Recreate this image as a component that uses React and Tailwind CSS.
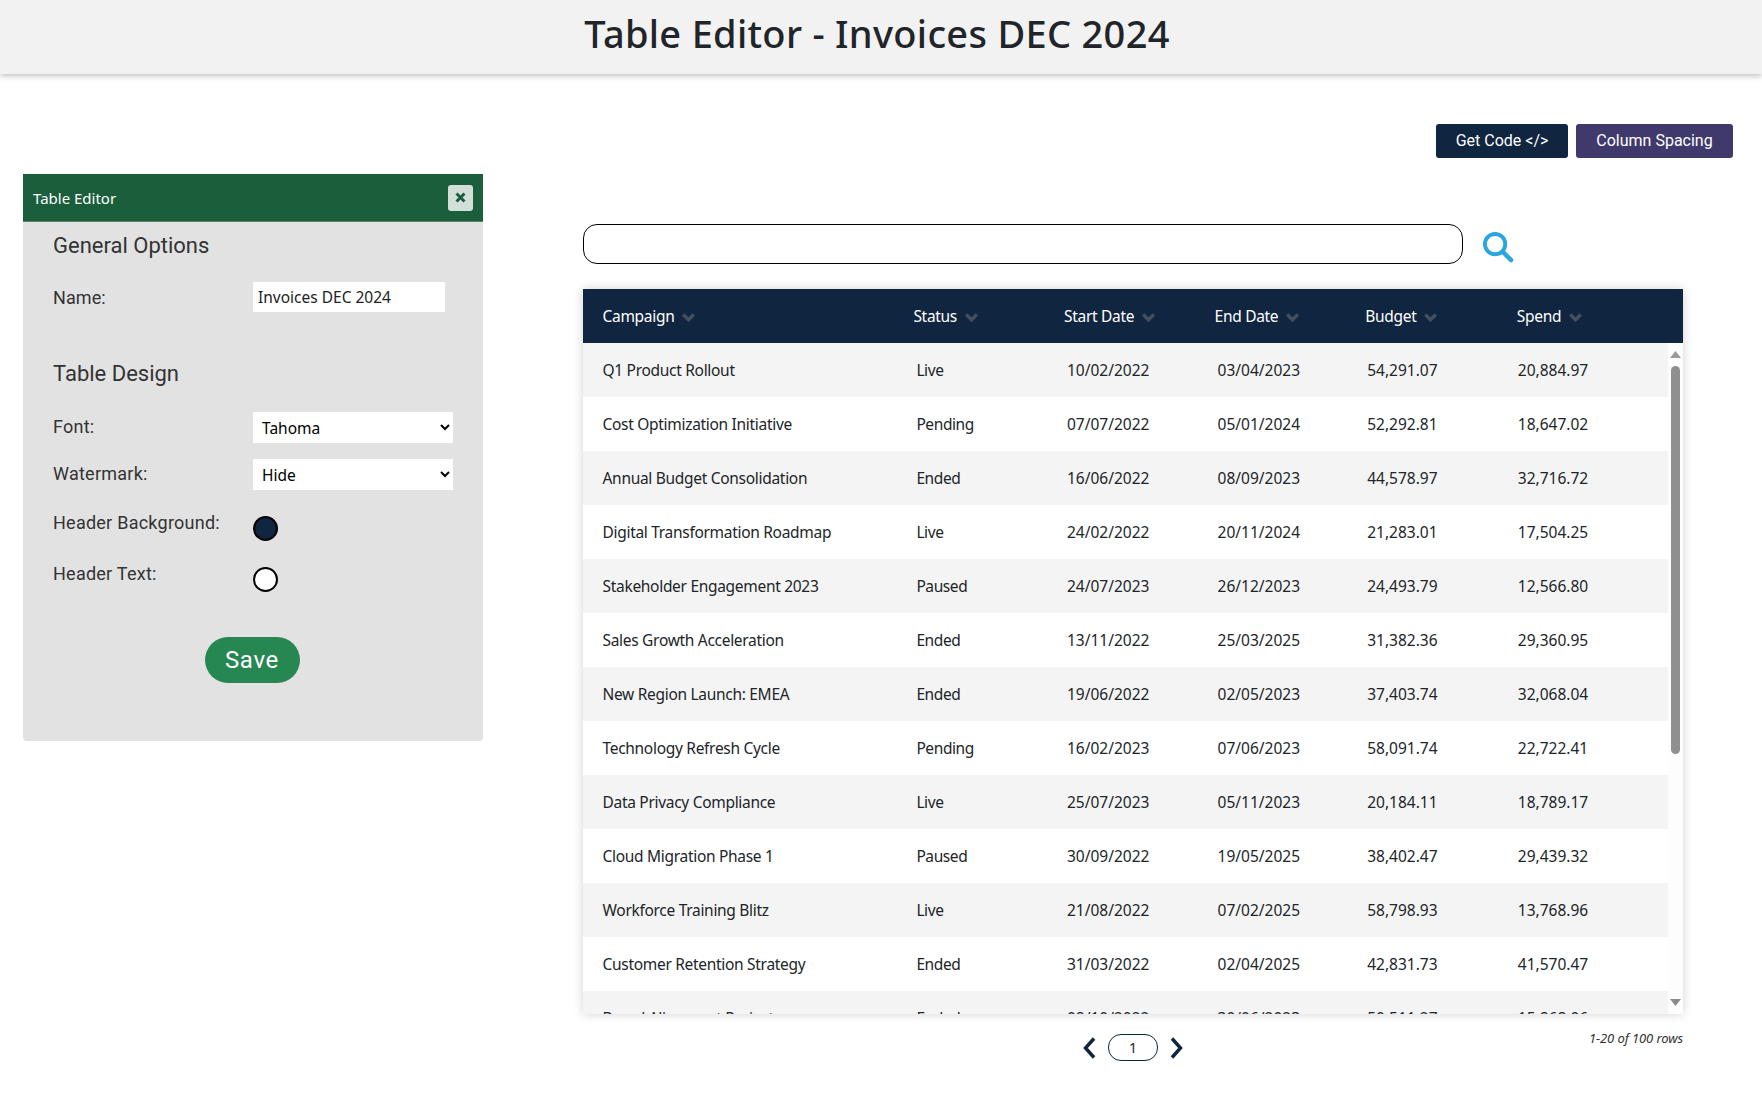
const rows = [
  ["Q1 Product Rollout","Live","10/02/2022","03/04/2023","54,291.07","20,884.97"],
  ["Cost Optimization Initiative","Pending","07/07/2022","05/01/2024","52,292.81","18,647.02"],
  ["Annual Budget Consolidation","Ended","16/06/2022","08/09/2023","44,578.97","32,716.72"],
  ["Digital Transformation Roadmap","Live","24/02/2022","20/11/2024","21,283.01","17,504.25"],
  ["Stakeholder Engagement 2023","Paused","24/07/2023","26/12/2023","24,493.79","12,566.80"],
  ["Sales Growth Acceleration","Ended","13/11/2022","25/03/2025","31,382.36","29,360.95"],
  ["New Region Launch: EMEA","Ended","19/06/2022","02/05/2023","37,403.74","32,068.04"],
  ["Technology Refresh Cycle","Pending","16/02/2023","07/06/2023","58,091.74","22,722.41"],
  ["Data Privacy Compliance","Live","25/07/2023","05/11/2023","20,184.11","18,789.17"],
  ["Cloud Migration Phase 1","Paused","30/09/2022","19/05/2025","38,402.47","29,439.32"],
  ["Workforce Training Blitz","Live","21/08/2022","07/02/2025","58,798.93","13,768.96"],
  ["Customer Retention Strategy","Ended","31/03/2022","02/04/2025","42,831.73","41,570.47"],
  ["Brand Alignment Project","Ended","08/10/2022","30/06/2023","50,511.27","15,868.06"],
];
const heads = ["Campaign","Status","Start Date","End Date","Budget","Spend"];
const tah = "font-['Noto_Sans','Open_Sans',sans-serif]";
const rob = "font-['Roboto',sans-serif]";

function Caret() {
  return (
    <svg width="13" height="9" viewBox="0 0 13 9" className="ml-[8px] mt-[2px]">
      <path d="M1.2 1.5 6.5 6.8 11.8 1.5" fill="none" stroke="#434f5f" strokeWidth="3.4" />
    </svg>
  );
}

export default function App() {
  return (
    <div className={`w-[1762px] h-[1104px] bg-white overflow-hidden ${tah}`}>
      <header className="h-[74px] bg-[#f2f2f2] shadow-[0_2px_6px_rgba(0,0,0,0.25)] flex items-center justify-center pb-[7px] pr-[8px]">
        <h1 className="text-[38px] font-medium text-[#212529] tracking-[0.3px]">Table Editor - Invoices DEC 2024</h1>
      </header>
      <div className="flex">
        <aside className="w-[460px] h-[567px] ml-[23px] mt-[100px] bg-[#e2e2e2] rounded-b-[4px]">
          <div className="h-[48px] bg-[#1b5e3b] border-b border-[#5f7f70] flex items-center justify-between pl-[10px] pr-[10px]">
            <span className="text-white text-[15px] mt-[1px]">Table Editor</span>
            <span className="w-[25px] h-[26px] rounded-[3px] bg-[#d3e0da] flex items-center justify-center">
              <svg width="13" height="13" viewBox="0 0 13 13"><path d="M2.5 2.5 10.5 10.5M10.5 2.5 2.5 10.5" stroke="#1b5e3b" strokeWidth="3" /></svg>
            </span>
          </div>
          <div className={`px-[30px] ${rob} text-[#333]`}>
            <h2 className="text-[22px] mt-[10px] leading-[28px]">General Options</h2>
            <div className="flex items-center mt-[22px] h-[30px]">
              <label className="w-[200px] text-[18px] tracking-[0.1px]">Name:</label>
              <input readOnly value="Invoices DEC 2024" className={`w-[192px] h-[30px] bg-white pl-[5px] text-[15.5px] text-[#222] outline-none ${tah}`} />
            </div>
            <h2 className="text-[22px] mt-[48px] leading-[28px]">Table Design</h2>
            <div className="flex items-center mt-[24px] h-[31px]">
              <label className="w-[200px] text-[18px] tracking-[0.25px] -mt-[2px]">Font:</label>
              <select defaultValue="Tahoma" className={`w-[200px] h-[31px] bg-white pl-[5px] text-[15.5px] text-black outline-none ${tah}`}>
                <option>Tahoma</option>
              </select>
            </div>
            <div className="flex items-center mt-[16px] h-[31px]">
              <label className="w-[200px] text-[18px] tracking-[0.25px] -mt-[2px]">Watermark:</label>
              <select defaultValue="Hide" className={`w-[200px] h-[31px] bg-white pl-[5px] text-[15.5px] text-black outline-none ${tah}`}>
                <option>Hide</option>
              </select>
            </div>
            <div className="flex items-start mt-[26px] h-[25px]">
              <label className="w-[200px] text-[18px] tracking-[0.25px] leading-[22px] -mt-[4px]">Header Background:</label>
              <span className="w-[25px] h-[25px] rounded-full bg-[#10253f] border-2 border-black" />
            </div>
            <div className="flex items-start mt-[26px] h-[25px]">
              <label className="w-[200px] text-[18px] tracking-[0.25px] leading-[22px] -mt-[4px]">Header Text:</label>
              <span className="w-[25px] h-[25px] rounded-full bg-white border-2 border-black" />
            </div>
            <div className="flex justify-center mt-[45px] pr-[2px]">
              <button className="w-[95px] h-[46px] rounded-full bg-[#268753] text-white text-[24px] tracking-[0.7px]">Save</button>
            </div>
          </div>
        </aside>
        <main className="ml-[100px] w-[1150px]">
          <div className={`flex justify-end gap-[8px] mt-[50px] ${rob}`}>
            <button className="w-[132px] h-[34px] bg-[#10253f] text-white text-[16px] rounded-[3px]">Get Code &lt;/&gt;</button>
            <button className="w-[157px] h-[34px] bg-[#3f3a6b] text-white text-[16px] rounded-[3px]">Column Spacing</button>
          </div>
          <div className="flex items-center mt-[66px] h-[39px]">
            <input readOnly className="w-[880px] h-[40px] border border-black rounded-[14px] outline-none" />
            <svg width="31" height="31" viewBox="0 0 32 32" className="ml-[20px] mt-[7px]">
              <circle cx="12.5" cy="12.5" r="10.5" fill="none" stroke="#2aa5e0" strokeWidth="4" />
              <path d="M20.5 20.5 29 29" stroke="#2aa5e0" strokeWidth="4.5" strokeLinecap="round" />
            </svg>
          </div>
          <div className="w-[1100px] mt-[26px] h-[725px] flex flex-col overflow-hidden shadow-[0_0_10px_rgba(0,0,0,0.18)]">
            <div className="h-[54px] shrink-0 bg-[#10253f] grid grid-cols-[330.4px_150.6px_150.6px_150.6px_151.6px_166px] items-center text-white text-[15.5px] tracking-[-0.3px]">
              {heads.map((h, i) => (
                <div key={h} className={`flex items-center mt-[1px] ${i === 0 ? "pl-[19.5px]" : "pl-0"}`}>
                  <span>{h}</span><Caret />
                </div>
              ))}
            </div>
            <div className="flex flex-1 min-h-0">
              <div className="flex-1 overflow-hidden">
                {rows.map((r, i) => (
                  <div key={r[0]} className={`h-[54px] grid grid-cols-[330.4px_150.6px_150.6px_150.6px_150.6px_152px] items-center text-[15.5px] text-[#212529] ${i % 2 === 0 ? "bg-[#f4f4f4]" : "bg-white"}`}>
                    {r.map((c, j) => (
                      <div key={j} className={`mt-[1px] ${j === 0 ? "pl-[19.5px] tracking-[-0.3px]" : j === 1 ? "pl-[3px] tracking-[-0.4px]" : j >= 4 ? "pl-[2px]" : "pl-[3px]"}`}>{c}</div>
                    ))}
                  </div>
                ))}
              </div>
              <div className="w-[15px] shrink-0 bg-[#fdfdfd] flex flex-col items-center relative">
                <svg width="11" height="7" viewBox="0 0 11 7" className="mt-[8px]"><path d="M5.5 0 11 7H0Z" fill="#9a9a9a" /></svg>
                <div className="w-[9px] h-[388px] mt-[8px] rounded-full bg-[#8f8f8f]" />
                <svg width="11" height="7" viewBox="0 0 11 7" className="mt-auto mb-[8px]"><path d="M5.5 7 11 0H0Z" fill="#8a8a8a" /></svg>
              </div>
            </div>
          </div>
          <div className="w-[1100px] relative flex items-center justify-center h-[27px] mt-[20px]">
            <svg width="13" height="22" viewBox="0 0 13 22"><path d="M11 1.5 2.5 11 11 20.5" fill="none" stroke="#10253f" strokeWidth="3.4" /></svg>
            <span className="w-[50px] h-[27px] mx-[12px] rounded-[13px] border border-[#10253f] flex items-center justify-center text-[14px] text-[#222]">1</span>
            <svg width="13" height="22" viewBox="0 0 13 22"><path d="M2 1.5 10.5 11 2 20.5" fill="none" stroke="#10253f" strokeWidth="3.4" /></svg>
            <span className="absolute right-0 -top-[5px] text-[13px] italic text-[#333] tracking-[-0.1px]">1-20 of 100 rows</span>
          </div>
        </main>
      </div>
    </div>
  );
}
